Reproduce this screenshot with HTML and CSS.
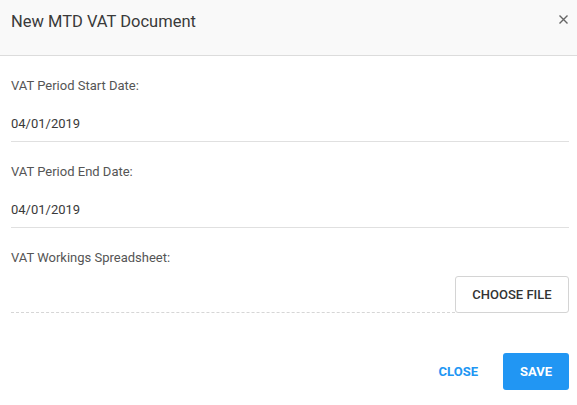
FILE: index.html
```html
<!DOCTYPE html>
<html>
<head>
<meta charset="utf-8">
<link rel="stylesheet" href="styles.css">
</head>
<body>
<div class="dialog">
  <div class="header">
    <div class="title">New MTD VAT Document</div>
    <svg class="close-x" width="9" height="9" viewBox="0 0 9 9"><path d="M0.5 0.5L8.5 8.5M8.5 0.5L0.5 8.5" stroke="#666" stroke-width="1.4"/></svg>
  </div>
  <div class="body">
    <div class="field">
      <div class="label">VAT Period Start Date:</div>
      <div class="value">04/01/2019</div>
    </div>
    <div class="field">
      <div class="label">VAT Period End Date:</div>
      <div class="value">04/01/2019</div>
    </div>
    <div class="file-field">
      <div class="label">VAT Workings Spreadsheet:</div>
      <div class="file-row">
        <div class="file-line"></div>
        <button class="choose">CHOOSE FILE</button>
      </div>
    </div>
  </div>
  <div class="footer">
    <button class="btn-text">CLOSE</button>
    <button class="btn-primary">SAVE</button>
  </div>
</div>
</body>
</html>
```

FILE: styles.css
```css
* { box-sizing: border-box; }
html, body { margin: 0; padding: 0; background: #fff; }
body { font-family: Roboto, "Liberation Sans", sans-serif; color: #333; }
.dialog { width: 577px; height: 405px; background: #fff; }
.header {
  height: 56px;
  background: #f9f9f9;
  border-bottom: 1px solid #dcdcdc;
  padding: 12px 9px 0 11px;
  display: flex;
  justify-content: space-between;
  align-items: flex-start;
}
.title { font-size: 16.5px; line-height: 20px; color: #3a3a3a; }
.close-x { margin-top: 3px; display: block; }
.body { padding: 0 8px 0 11px; }
.field {
  height: 86px;
  padding-top: 21px;
  border-bottom: 1px solid #e0e0e0;
}
.label { font-size: 13px; line-height: 18px; color: #555; }
.value { font-size: 13px; line-height: 18px; color: #3a3a3a; margin-top: 20px; }
.file-field { padding-top: 21px; }
.file-row { display: flex; align-items: flex-end; margin-top: 9px; }
.file-line { flex: 1; border-bottom: 1px dashed #d6d6d6; }
.choose {
  height: 37px;
  width: 114px;
  padding: 0;
  background: #fff;
  border: 1px solid #d4d4d4;
  border-radius: 3px;
  font-family: inherit;
  font-size: 13px;
  font-weight: 500;
  color: #333;
}
.footer {
  display: flex;
  justify-content: flex-end;
  align-items: center;
  padding: 40px 8px 0 11px;
}
.btn-text {
  height: 37px;
  padding: 0 16px;
  margin-right: 9px;
  background: none;
  border: none;
  font-family: inherit;
  font-size: 13px;
  font-weight: 700;
  color: #2196f3;
}
.btn-primary {
  height: 37px;
  width: 66px;
  padding: 0;
  background: #2196f3;
  border: none;
  border-radius: 3px;
  font-family: inherit;
  font-size: 13px;
  font-weight: 700;
  color: #fff;
}
```
